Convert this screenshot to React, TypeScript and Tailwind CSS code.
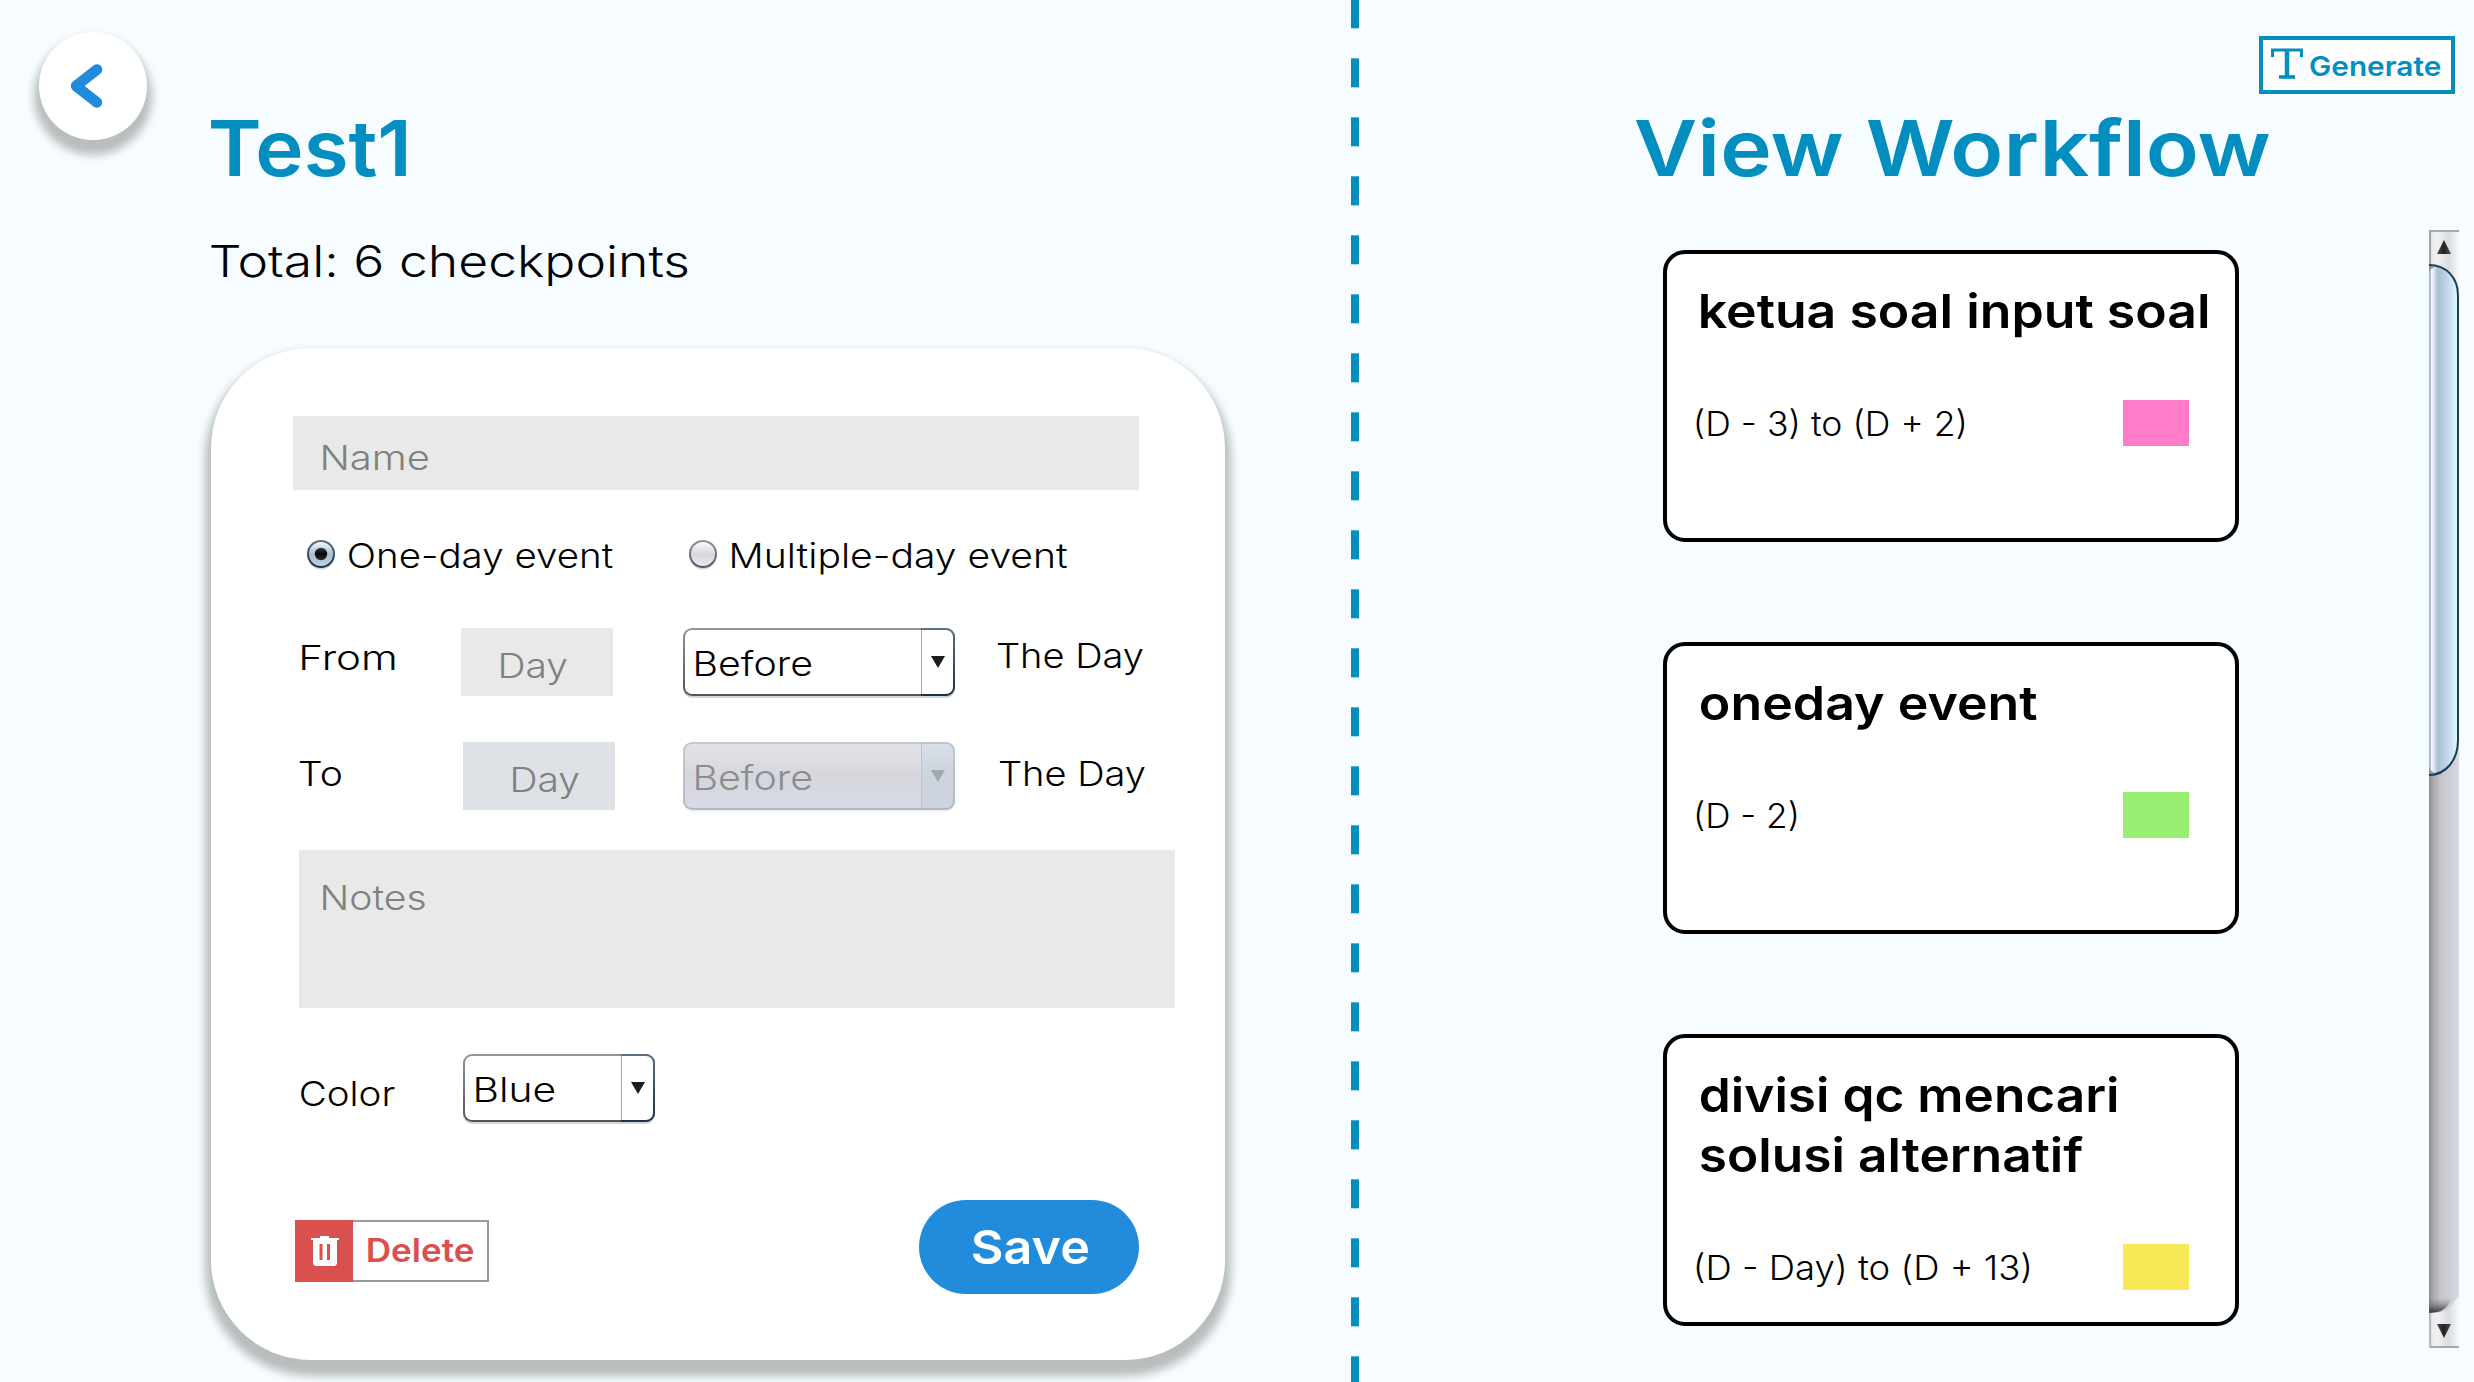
import { useLayoutEffect, useRef, useState } from "react";
import type { ReactNode } from "react";

/** One line of text whose glyphs are stretched to span exactly `w` pixels. */
function Line({ w, className = "", children }: { w: number; className?: string; children: string }) {
  const ref = useRef<HTMLSpanElement>(null);
  const [transform, setTransform] = useState("none");
  useLayoutEffect(() => {
    if (!ref.current) return;
    const cs = getComputedStyle(ref.current);
    const ctx = document.createElement("canvas").getContext("2d");
    if (!ctx) return;
    ctx.font = `${cs.fontWeight} ${cs.fontSize} ${cs.fontFamily}`;
    const m = ctx.measureText(children);
    const scale = w / (m.actualBoundingBoxLeft + m.actualBoundingBoxRight);
    setTransform(`translateX(${m.actualBoundingBoxLeft * scale}px) scaleX(${scale})`);
  }, [w, children]);
  return (
    <div className={`shrink-0 ${className}`} style={{ width: w }}>
      <span ref={ref} className="block w-max origin-left whitespace-pre" style={{ transform }}>
        {children}
      </span>
    </div>
  );
}

function Radio({ checked = false, className = "" }: { checked?: boolean; className?: string }) {
  return (
    <svg width="28" height="30" viewBox="0 0 28 30" className={`shrink-0 ${className}`}>
      <defs>
        <linearGradient id="ringOn" x1="0" y1="0" x2="0" y2="1">
          <stop offset="0" stopColor="#5b7188" />
          <stop offset="1" stopColor="#1d3247" />
        </linearGradient>
        <linearGradient id="fillOn" x1="0" y1="0" x2="0" y2="1">
          <stop offset="0" stopColor="#f4f8fb" />
          <stop offset="0.5" stopColor="#a9bed2" />
          <stop offset="1" stopColor="#bcd0e2" />
        </linearGradient>
        <linearGradient id="ringOff" x1="0" y1="0" x2="0" y2="1">
          <stop offset="0" stopColor="#94949a" />
          <stop offset="1" stopColor="#54545c" />
        </linearGradient>
        <linearGradient id="fillOff" x1="0" y1="0" x2="0" y2="1">
          <stop offset="0" stopColor="#fbfbfc" />
          <stop offset="0.5" stopColor="#d5d7e0" />
          <stop offset="1" stopColor="#e6e8f0" />
        </linearGradient>
        <linearGradient id="dot" x1="0" y1="0" x2="0" y2="1">
          <stop offset="0" stopColor="#3a3d40" />
          <stop offset="0.5" stopColor="#050505" />
          <stop offset="1" stopColor="#2c2f33" />
        </linearGradient>
      </defs>
      <circle cx="14" cy="16" r="13.5" fill="#d4d8e0" />
      <circle cx="14" cy="14" r="14" fill={checked ? "url(#ringOn)" : "url(#ringOff)"} />
      <circle cx="14" cy="14" r="12" fill={checked ? "url(#fillOn)" : "url(#fillOff)"} />
      {checked && <circle cx="14" cy="14" r="6.2" fill="url(#dot)" />}
    </svg>
  );
}

function Select({ text, w, className, disabled = false }: { text: string; w: number; className: string; disabled?: boolean }) {
  const frame = disabled
    ? "bg-linear-to-b from-[#c4c7ce] to-[#b4b9c4] shadow-[0_2px_0_#f3f3f5]"
    : "bg-linear-to-b from-[#94949c] to-[#54545c] shadow-[0_2px_0_#d5d5d8]";
  const cap = disabled ? "bg-linear-to-b from-[#bcc6d0] to-[#b0bac6]" : "bg-linear-to-b from-[#5b7188] to-[#1d3247]";
  const body = disabled ? "bg-linear-to-b from-[#e2e2e6] via-[#d6d7dd] to-[#d6dae4]" : "bg-white";
  const button = disabled
    ? "border-[#bcc6d0] bg-linear-to-b from-[#d9dfe7] via-[#cdd3dd] to-[#ccd4e0]"
    : "border-[#9fabb6] bg-white";
  return (
    <div className={`flex h-[68px] shrink-0 overflow-hidden rounded-[9px] ${frame} ${className}`}>
      <div className="flex grow py-[2px] pl-[2px]">
        <div className={`grow rounded-l-[7px] pt-[17px] pl-[11px] ${body} ${disabled ? "text-[#8b8c90]" : "text-black"}`}>
          <Line w={w}>{text}</Line>
        </div>
      </div>
      <div className={`flex w-[34px] py-[2px] pr-[2px] ${cap}`}>
        <div className={`grow rounded-r-[7px] border-l pt-[26px] pl-[9px] ${button}`}>
          <svg width="14" height="12" viewBox="0 0 14 12">
            <path d="M0 0H14L7 12Z" fill={disabled ? "#a3a8b0" : "#1c1c1c"} />
          </svg>
        </div>
      </div>
    </div>
  );
}

function Checkpoint({ titles, date, dateW, swatch }: { titles: [string, number][]; date: string; dateW: number; swatch: string }) {
  return (
    <div className="h-[292px] w-[576px] rounded-[22px] border-4 border-black bg-white pt-[27px]">
      <div className="ml-[33.5px] text-[47px] leading-[60px] font-[560]">
        {titles.map(([t, w]) => (
          <Line key={t} w={w}>{t}</Line>
        ))}
      </div>
      <div className="mt-[59px] flex justify-between pr-[46px] pl-[29px]">
        <Line w={dateW} className="mt-[7px]">{date}</Line>
        <div className={`h-[46px] w-[66px] ${swatch}`} />
      </div>
    </div>
  );
}

function ScrollBar({ className }: { className: string }) {
  return (
    <svg width="30" height="1118" viewBox="0 0 30 1118" className={`shrink-0 ${className}`}>
      <defs>
        <linearGradient id="track">
          <stop offset="0" stopColor="#8a8a8c" />
          <stop offset="0.15" stopColor="#acacaf" />
          <stop offset="0.4" stopColor="#c6c6cb" />
          <stop offset="1" stopColor="#d6d7e0" />
        </linearGradient>
        <linearGradient id="cap">
          <stop offset="0" stopColor="#b0b0b2" />
          <stop offset="0.1" stopColor="#e9ebed" />
          <stop offset="0.3" stopColor="#eff1f3" />
          <stop offset="0.65" stopColor="#d9dbde" />
          <stop offset="1" stopColor="#f6f8fa" />
        </linearGradient>
        <linearGradient id="thumb">
          <stop offset="0" stopColor="#aab8cb" />
          <stop offset="0.06" stopColor="#b4c0d0" />
          <stop offset="0.08" stopColor="#f6f9fc" />
          <stop offset="0.16" stopColor="#dfe8f1" />
          <stop offset="0.3" stopColor="#a9bed3" />
          <stop offset="0.6" stopColor="#bdd4ea" />
          <stop offset="1" stopColor="#e2fbff" />
        </linearGradient>
        <linearGradient id="trackEnd" x1="0" y1="0" x2="0" y2="1">
          <stop offset="0" stopColor="#777" stopOpacity="0" />
          <stop offset="1" stopColor="#333538" />
        </linearGradient>
        <linearGradient id="arrow">
          <stop offset="0" stopColor="#4a4a4a" />
          <stop offset="0.5" stopColor="#222" />
          <stop offset="1" stopColor="#505050" />
        </linearGradient>
      </defs>
      <rect width="30" height="1118" fill="url(#track)" />
      <path d="M0 0H30V58C26 45 16 35 0 35Z" fill="url(#cap)" />
      <path d="M0 1H30" stroke="#a9a9ac" strokeWidth="2" />
      <path d="M1 0V34" stroke="#a3a3a6" strokeWidth="2" />
      <path d="M15 10L22 24H8Z" fill="url(#arrow)" />
      <path d="M0 35C17 35 29 47 29 66V510C29 530 17 545 0 545Z" fill="url(#thumb)" />
      <path d="M0 42Q2 38 6 37L0 36ZM0 537Q2 542 6 543L0 544Z" fill="#7f95aa" />
      <path d="M0 35C17 35 29 47 29 66V510C29 530 17 545 0 545" fill="none" stroke="#223b54" strokeWidth="2" />
      <path d="M0 1068H22Q18 1083 0 1083Z" fill="url(#trackEnd)" />
      <path d="M30 1067V1118H0V1083C14 1083 20 1080 24 1073Q27 1068 30 1067Z" fill="url(#cap)" />
      <path d="M0 1117H30" stroke="#a9a9ac" strokeWidth="2" />
      <path d="M1 1084V1118" stroke="#b8b8bb" strokeWidth="2" />
      <path d="M8 1094H22L15 1108Z" fill="url(#arrow)" />
    </svg>
  );
}

function Row({ className, children }: { className: string; children: ReactNode }) {
  return <div className={`flex items-start ${className}`}>{children}</div>;
}

export default function App() {
  return (
    <div className="flex h-[1382px] w-[2474px] overflow-hidden bg-[#f6fcff] font-['Inter','Open_Sans',sans-serif] text-[34px] leading-[34px] font-[350] text-black">
      <section className="flex w-[1351px] shrink-0 items-start">
        <div className="w-[211px] shrink-0 pt-[32px] pl-[39px]">
          <button className="flex size-[108px] items-center justify-center rounded-full bg-white shadow-[0_10px_8px_5px_#b8bebd]">
            <svg width="108" height="108" viewBox="0 0 108 108" fill="none" stroke="#218bdb" strokeWidth="10.5" strokeLinecap="round" strokeLinejoin="round">
              <path d="M58 37.5L37 54L58 70.5" />
            </svg>
          </button>
        </div>
        <div className="w-[1014px] shrink-0 pt-[110px]">
          <h1 className="text-[77px] leading-[77px] font-[580] text-[#038ec0]">
            <Line w={195}>Test1</Line>
          </h1>
          <p className="mt-[52px] text-[44px] leading-[44px]">
            <Line w={477}>Total: 6 checkpoints</Line>
          </p>
          <div className="mt-[65px] h-[1012px] rounded-[100px] bg-white pt-[68px] shadow-[0_10px_8px_6px_#b8bebd]">
            <div className="ml-[82px] h-[74px] w-[846px] bg-[#e9e9e9] pt-[25px] pl-[30px] font-light text-[#808080]">
              <Line w={105}>Name</Line>
            </div>
            <Row className="mt-[50px] ml-[96px] h-[29px]">
              <Radio checked />
              <Line w={264} className="-mt-[1px] ml-[13.6px]">One-day event</Line>
              <Radio className="ml-[76.4px]" />
              <Line w={335.5} className="-mt-[1px] ml-[15px]">Multiple-day event</Line>
            </Row>
            <Row className="mt-[59px] ml-[91px] h-[68px]">
              <Line w={92.5} className="mt-[13px]">From</Line>
              <div className="ml-[66.5px] h-[68px] w-[152px] bg-[#e9e9e9] pt-[21px] pl-[40px] font-light text-[#808080]">
                <Line w={66}>Day</Line>
              </div>
              <Select text="Before" w={115} className="ml-[70px] w-[272px]" />
              <Line w={146} className="mt-[11px] ml-[42px]">The Day</Line>
            </Row>
            <Row className="mt-[46px] ml-[88px] h-[68px]">
              <Line w={42.5} className="mt-[15px]">To</Line>
              <div className="ml-[121.5px] h-[68px] w-[152px] bg-[#dee1e6] pt-[21px] pl-[50px] font-light text-[#808080]">
                <Line w={66}>Day</Line>
              </div>
              <Select disabled text="Before" w={115} className="ml-[68px] w-[272px]" />
              <Line w={146} className="mt-[15px] ml-[44px]">The Day</Line>
            </Row>
            <div className="mt-[40px] ml-[88px] h-[158px] w-[876px] bg-[#e9e9e9] pt-[31px] pl-[24px] font-light text-[#808080]">
              <Line w={102}>Notes</Line>
            </div>
            <Row className="mt-[46px] ml-[90px] h-[68px]">
              <Line w={94} className="mt-[23px]">Color</Line>
              <Select text="Blue" w={78} className="ml-[68px] w-[192px]" />
            </Row>
            <Row className="mt-[78px] ml-[84px]">
              <button className="mt-[20px] flex h-[62px] w-[194px] border-2 border-l-0 border-[#999] bg-white text-[32px] leading-[32px] font-[560] text-[#d9504f]">
                <div className="-my-[2px] h-[62px] w-[58px] shrink-0 bg-[#d9504f] pt-[16px] pl-[16px]">
                  <svg width="28" height="30" viewBox="0 0 28 30">
                    <path d="M0 2H9V0H18V2H28V4H26V28L24 30H4L2 28V4H0Z" fill="#fff" />
                    <path d="M10 8V24M17.5 8V24" stroke="#d9504f" strokeWidth="3" />
                  </svg>
                </div>
                <Line w={105.5} className="mt-[13px] ml-[14.5px]">Delete</Line>
              </button>
              <button className="flex h-[94px] w-[220.5px] items-start rounded-full bg-[#218cdb] pt-[23px] pl-[54px] ml-[429.5px] text-left text-[47px] leading-[47px] font-[580] text-white">
                <Line w={115}>Save</Line>
              </button>
            </Row>
          </div>
        </div>
      </section>
      <div className="w-[8px] shrink-0 bg-[repeating-linear-gradient(to_bottom,#038ec0_0_29.5px,transparent_29.5px_59px)] bg-[position:0_-0.7px]" />
      <section className="w-[1115px] shrink-0 pt-[36px]">
        <button className="ml-[900px] flex h-[58px] w-[196px] border-4 border-[#038ec0] bg-white text-[27.5px] leading-[28px] font-[560] text-[#038ec0]">
          <svg width="32" height="31" viewBox="0 0 32 31" className="mt-[7.5px] ml-[8px] shrink-0" fill="none" stroke="#038ec0">
            <path d="M1.5 9V2H30.5V9" strokeWidth="3" />
            <path d="M16 2V29" strokeWidth="4.5" />
            <path d="M8 29H24" strokeWidth="3.6" />
          </svg>
          <Line w={131} className="mt-[12px] ml-[7px]">Generate</Line>
        </button>
        <h2 className="mt-[16px] ml-[276px] text-[77px] leading-[77px] font-[580] text-[#038ec0]">
          <Line w={634}>View Workflow</Line>
        </h2>
        <div className="mt-[43px] flex items-start">
          <div className="ml-[304px] flex flex-col gap-[100px] pt-[20px]">
            <Checkpoint titles={[["ketua soal input soal", 507]]} date="(D - 3) to (D + 2)" dateW={269} swatch="bg-[#ff7ccb]" />
            <Checkpoint titles={[["oneday event", 336]]} date="(D - 2)" dateW={101} swatch="bg-[#98ee70]" />
            <Checkpoint
              titles={[["divisi qc mencari", 416], ["solusi alternatif", 382]]}
              date="(D - Day) to (D + 13)"
              dateW={334}
              swatch="bg-[#f8e858]"
            />
          </div>
          <ScrollBar className="ml-[190px]" />
        </div>
      </section>
    </div>
  );
}
